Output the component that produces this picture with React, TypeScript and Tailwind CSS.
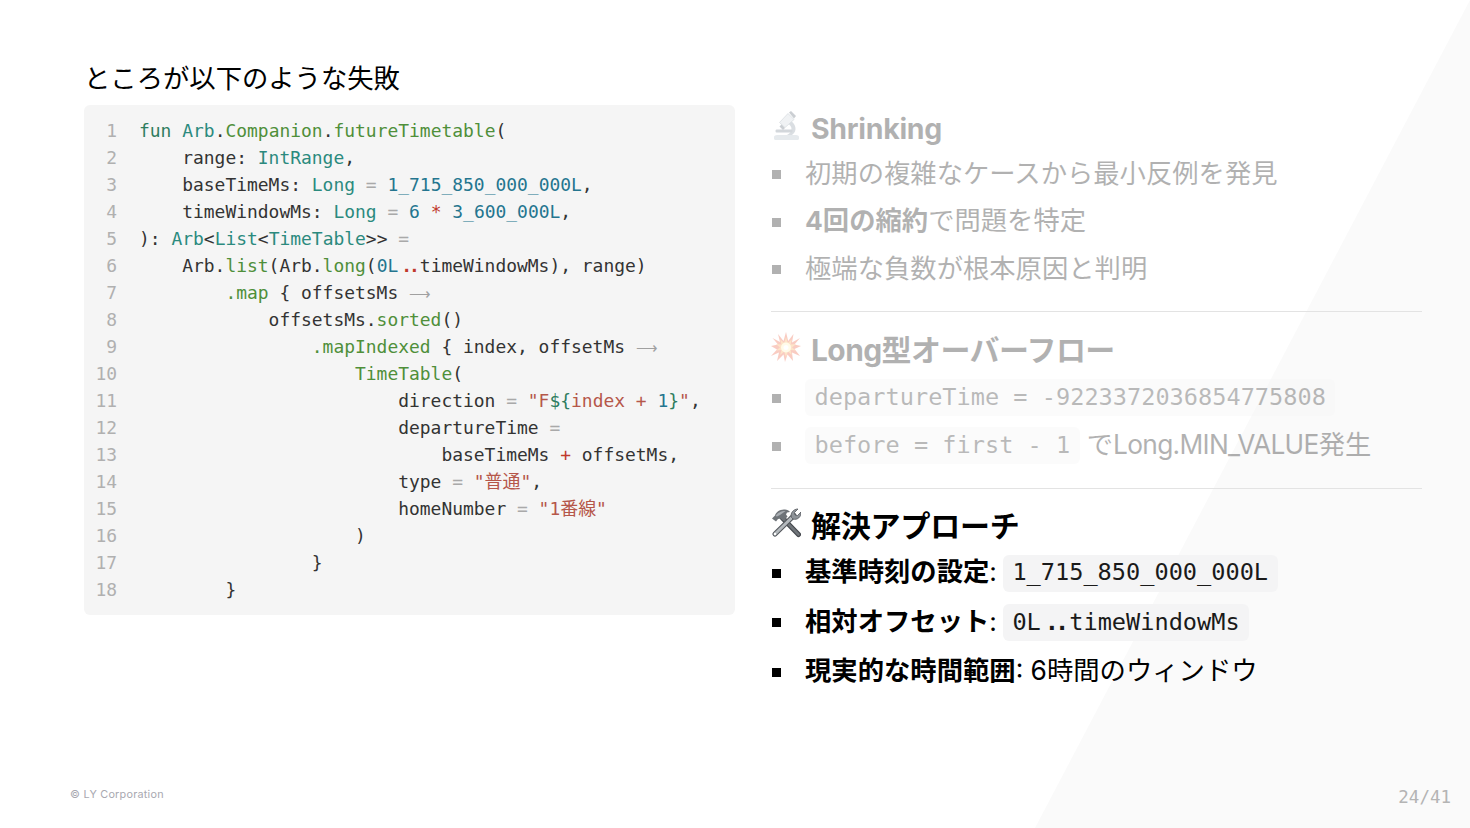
const kw = "text-[#2f7d5f]";
const ty = "text-[#2b8a7e]";
const fn = "text-[#4f8f3a]";
const num = "text-[#24758f]";
const str = "text-[#b5574a]";
const op = "text-[#a9a9a9]";
const red = "text-[#c0392b]";

type Tok = [string, string?];

const code: Tok[][] = [
  [["fun", kw], [" "], ["Arb", ty], ["."], ["Companion", fn], ["."], ["futureTimetable", fn], ["("]],
  [["    range: "], ["IntRange", ty], [","]],
  [["    baseTimeMs: "], ["Long", ty], [" "], ["=", op], [" "], ["1_715_850_000_000L", num], [","]],
  [["    timeWindowMs: "], ["Long", ty], [" "], ["=", op], [" "], ["6", num], [" "], ["*", red], [" "], ["3_600_000L", num], [","]],
  [["): "], ["Arb", ty], ["<"], ["List", ty], ["<"], ["TimeTable", ty], [">> "], ["=", op]],
  [["    Arb."], ["list", fn], ["(Arb."], ["long", fn], ["("], ["0L", num], ["..", "dots"], ["timeWindowMs), range)"]],
  [["        "], [".map", fn], [" { offsetsMs "], ["⟶", "arrow"]],
  [["            offsetsMs."], ["sorted", fn], ["()"]],
  [["                "], [".mapIndexed", fn], [" { index, offsetMs "], ["⟶", "arrow"]],
  [["                    "], ["TimeTable", fn], ["("]],
  [["                        direction "], ["=", op], [" "], ['"F', str], ["$", kw], ["{", kw], ["index + ", str], ["1", num], ["}", kw], ['"', str], [","]],
  [["                        departureTime "], ["=", op]],
  [["                            baseTimeMs "], ["+", red], [" offsetMs,"]],
  [["                        type "], ["=", op], [" "], ['"普通"', str], [","]],
  [["                        homeNumber "], ["=", op], [" "], ['"1番線"', str]],
  [["                    )"]],
  [["                }"]],
  [["        }"]],
];

function Token({ text, cls }: { text: string; cls?: string }) {
  if (cls === "dots") {
    return <span className="inline-block w-[2ch] text-center tracking-[-3px] font-bold text-[#c0392b]">{text}</span>;
  }
  if (cls === "arrow") {
    return <span className="inline-block w-[2ch] text-center text-[15px] font-['DejaVu_Sans',sans-serif] font-light text-[#a0a0a0]">{text}</span>;
  }
  return <span className={cls}>{text}</span>;
}

function Microscope() {
  return (
    <svg viewBox="0 0 30 30" className="w-[30px] h-[30px] shrink-0">
      <path d="M3 26c0-1 1-2 3-2h19c2 0 3 1 3 2v1.500c0 1-1 1.500-2 1.500H5c-1 0-2-.5-2-1.500z" fill="#aebbc6" />
      <path d="M18 9c7 3 9 11 3 15h-5c6-3 6-9 0-12z" fill="#8795a1" />
      <path d="M6 18.500h14c1 0 1.500.5 1.500 1.500s-.5 1.500-1.500 1.500H6c-1 0-1.500-.5-1.500-1.500s.5-1.500 1.500-1.500z" fill="#6f7d89" />
      <path d="M8.500 11.500 17 2.500l6 6-9 8z" fill="#cfd7de" stroke="#8795a1" strokeWidth="0.8" />
      <path d="M8.500 15.500l2-2 3.500 3.500-2 2z" fill="#566370" />
      <path d="M18 1.500 20 0l5 5-2 2.500z" fill="#566370" />
    </svg>
  );
}

function Collision() {
  return (
    <svg viewBox="0 0 30 30" className="w-[30px] h-[30px] shrink-0">
      <path d="M15 0l2.200 9L22.500 2l-1.500 8.500L29 6l-5.500 6.500L30 14l-6.500 3L29 24l-8-3.500L22 29l-5.500-6.500L14 30l-1.500-7.500L6 29l2-8.500L0 24l6-6.500L0 14l7-1.500L1.500 6 9 10 7 2l5.500 7z" fill="#ee5a3a" />
      <path d="M15 5l1.800 6 4-3.500-1.200 5 5.400-.5-4 3.500 4 3-5.400-.5 1.200 5-4-3.500-1.800 6-1.800-6-4 3.500 1.200-5-5.400.5 4-3-4-3.500 5.400.5-1.200-5 4 3.500z" fill="#fba94c" />
      <circle cx="15" cy="15.500" r="5" fill="#fff2b8" />
      <circle cx="15" cy="15.500" r="2.500" fill="#ffffff" />
    </svg>
  );
}

function Tools() {
  return (
    <svg viewBox="0 0 30 30" className="w-[30px] h-[30px] shrink-0">
      <path d="M11 9.500 27.500 26.500" stroke="#44484d" strokeWidth="5" strokeLinecap="round" />
      <path d="M11 9.500 27.500 26.500" stroke="#70757a" strokeWidth="2.600" strokeLinecap="round" />
      <path d="M1 10.500 4 7.500C5 4 9 1 14 1.500c2 .2 4 1 5 2.500l-3 .5-1 2 1.500 2L12.500 13l-3-2.500-2.500.5-2 2.500z" fill="#6e7378" />
      <path d="M4.500 8C6 5 10 3 14.500 3L9 7l-3 1.500z" fill="#a8adb2" />
      <path d="M23 7.500 4 26" stroke="#55595e" strokeWidth="5.200" strokeLinecap="round" />
      <path d="M23 7.500 4 26" stroke="#b4b9bd" strokeWidth="3" strokeLinecap="round" />
      <path d="M20.500 9.500C19 5.500 22 1 27 1l-3.500 3.500.5 2.500 2.500.5L30 4c.5 5-4 8.500-8 7z" fill="#8e9398" stroke="#55595e" strokeWidth="0.8" />
      <circle cx="4" cy="26" r="1.200" fill="#ffffff" />
    </svg>
  );
}

function Heading({ icon, children }: { icon: React.ReactNode; children: React.ReactNode }) {
  return (
    <h2 className="flex items-center h-[42px] text-[30px] font-bold leading-none tracking-[-0.2px] text-black">
      <span className="w-[40px] -mt-[6px]">{icon}</span>
      {children}
    </h2>
  );
}

function Item({ h, children }: { h: string; children: React.ReactNode }) {
  return (
    <li className={`flex items-center ${h} text-[26.330px] leading-none text-black whitespace-nowrap`}>
      <span className="w-[9px] h-[9px] bg-black ml-[1px] mr-[24px] mt-[4px] shrink-0" />
      <span className="flex items-center">{children}</span>
    </li>
  );
}

function Mono({ children, low }: { children: React.ReactNode; low?: boolean }) {
  return (
    <code className={`inline-flex items-center h-[37px] ${low ? "mt-[4px]" : "mt-[2px]"} px-[9.500px] rounded-[6px] bg-[#f4f4f5] text-[23.600px] font-['DejaVu_Sans_Mono',monospace] text-[#1a1a1a] whitespace-pre`}>
      {children}
    </code>
  );
}

export default function App() {
  return (
    <div className="relative w-[1470px] h-[828px] overflow-hidden bg-white font-['Inter','Noto_Sans_CJK_JP',sans-serif]">
      <div className="absolute inset-0 bg-[#fafafa] [clip-path:polygon(100%_0,100%_100%,1035px_100%)]" />

      <div className="relative flex gap-[36px] pl-[84px] pr-[48px] pt-[60px]">
        <div className="w-[651px] shrink-0">
          <h1 className="h-[45px] text-[26.330px] leading-[36px] text-black">ところが以下のような失敗</h1>
          <div className="flex h-[510px] rounded-[6px] bg-[#f5f5f5] pt-[12px] text-[17.950px] leading-[27px] font-['DejaVu_Sans_Mono','Noto_Sans_CJK_JP',monospace] text-[#333]">
            <div className="w-[55px] shrink-0 pr-[22px] text-right text-[#b0b0b0]">
              {code.map((_, i) => (
                <div key={i}>{i + 1}</div>
              ))}
            </div>
            <div className="whitespace-pre">
              {code.map((line, i) => (
                <div key={i} className="h-[27px]">
                  {line.map(([text, cls], j) => (
                    <Token key={j} text={text} cls={cls} />
                  ))}
                </div>
              ))}
            </div>
          </div>
        </div>

        <div className="flex-1 pt-[48px]">
          <div className="opacity-30">
            <Heading icon={<Microscope />}>
              <span className="text-[28.500px] tracking-[-0.300px]">Shrinking</span>
            </Heading>
            <ul className="-mt-[1px]">
              <Item h="h-[47.500px]">初期の複雑なケースから最小反例を発見</Item>
              <Item h="h-[47.500px]">
                <b>4回の縮約</b>で問題を特定
              </Item>
              <Item h="h-[47.500px]">極端な負数が根本原因と判明</Item>
            </ul>
          </div>
          <hr className="mt-[19px] mb-[17px] border-t border-[#e3e3e3]" />
          <div className="opacity-30">
            <Heading icon={<Collision />}>
              <span className="tracking-[-0.600px]">Long型オーバーフロー</span>
            </Heading>
            <ul className="pt-[2px]">
              <Item h="h-[48px]">
                <Mono>departureTime = -9223372036854775808</Mono>
              </Item>
              <Item h="h-[48px]">
                <Mono>before = first - 1</Mono>
                <span className="ml-[7px]">
                  で<span className="tracking-[-0.700px]">Long.MIN_VALUE</span>発生
                </span>
              </Item>
            </ul>
          </div>
          <hr className="mt-[19px] mb-[16px] border-t border-[#e3e3e3]" />
          <div>
            <Heading icon={<Tools />}>解決アプローチ</Heading>
            <ul>
              <Item h="h-[49.500px]">
                <b>基準時刻の設定</b>:<span className="w-[6px]" />
                <Mono low>1_715_850_000_000L</Mono>
              </Item>
              <Item h="h-[49.500px]">
                <b>相対オフセット</b>:<span className="w-[6px]" />
                <Mono low>
                  0L<span className="inline-block w-[2ch] text-center tracking-[-4px] font-bold">..</span>timeWindowMs
                </Mono>
              </Item>
              <Item h="h-[49.500px]">
                <b>現実的な時間範囲</b>: 6時間のウィンドウ
              </Item>
            </ul>
          </div>
        </div>
      </div>

      <div className="absolute left-[70px] top-[788px] text-[10.800px] leading-[14px] tracking-[0.25px] text-[#a8a8b0]">
        © LY Corporation
      </div>
      <div className="absolute right-[19px] top-[787px] text-[17.500px] leading-[20px] font-['DejaVu_Sans_Mono',monospace] text-[#b4b4b4]">
        24/41
      </div>
    </div>
  );
}
